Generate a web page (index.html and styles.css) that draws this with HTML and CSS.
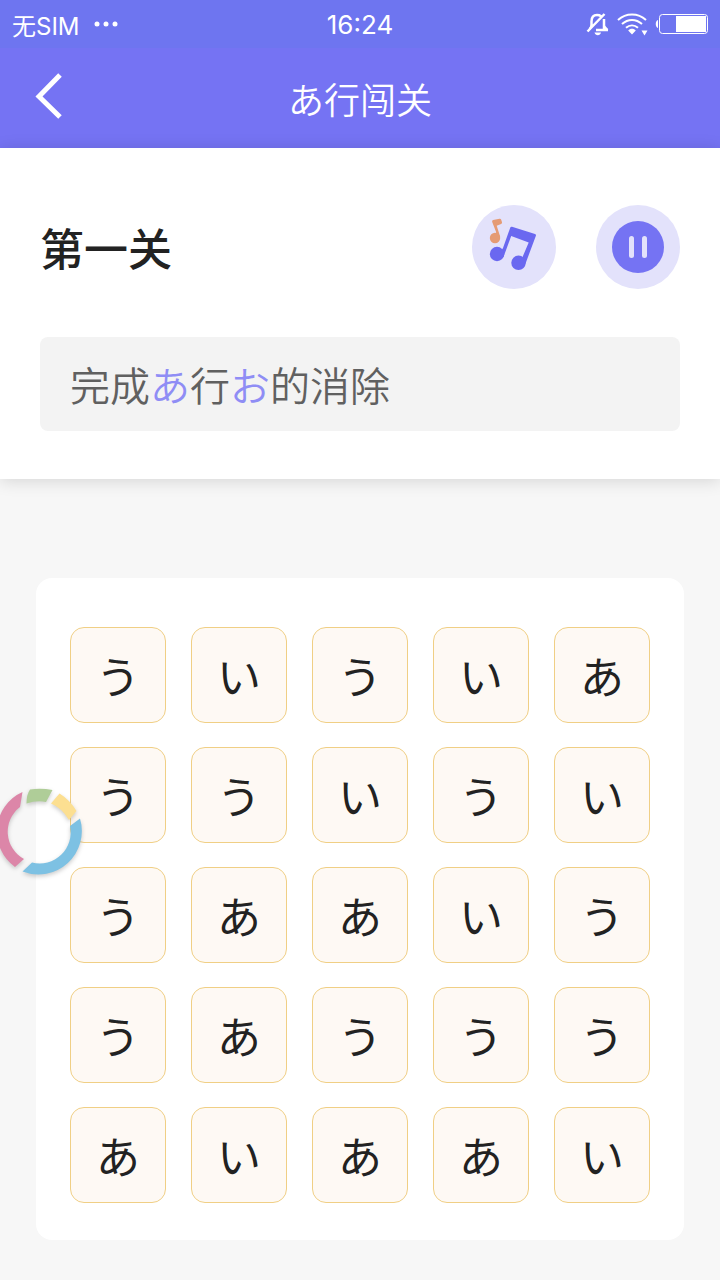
FILE: index.html
```html
<!doctype html>
<html lang="zh-CN">
<head>
    <meta charset="utf-8">
    <meta name="viewport" content="width=device-width, initial-scale=1">
    <title>あ行闯关</title>
    <link rel="stylesheet" href="styles.css">
</head>
<body>
<div class="status-bar">
    <div class="carrier">
        <span>无SIM</span>
        <svg width="24" height="6" viewBox="0 0 24 6" fill="#fff">
            <circle cx="3" cy="3" r="2.500"/><circle cx="12" cy="3" r="2.500"/><circle cx="21" cy="3" r="2.500"/>
        </svg>
    </div>
    <div class="clock">16:24</div>
    <div class="indicators">
        <svg width="24" height="24" viewBox="0 0 24 24" fill="none" stroke="#fff" stroke-width="2.500">
            <path d="M5.500 14V9.500C5.500 5.500 7.500 3 11 3c1.500 0 3 .4 4 1.200M18 7V18M10 18h12M1.500 19.500L18.500 2"/>
            <path d="M3.500 17l2.500-4M18 14l3.500 4" stroke-width="2"/>
            <path d="M8.500 20.500h6.500c-.5 1.800-1.600 2.700-3.200 2.700s-2.800-.9-3.300-2.700z" fill="#fff" stroke="none"/>
        </svg>
        <svg width="32" height="24" viewBox="0 0 32 24" fill="none" stroke="#fff" stroke-width="2">
            <path d="M2 8C10 .5 22 .5 30 8M6 12c6-5.500 14-5.500 20 0M10 15.800c3.600-3.200 8.400-3.200 12 0"/>
            <path d="M12.200 18.500c2-2.200 5.600-2.200 7.600 0L16 22.500zM25.500 18.500h6L28.500 23.500z" fill="#fff" stroke="none"/>
        </svg>
        <svg width="54" height="24" viewBox="0 0 54 24" fill="none" stroke="#fff">
            <path d="M4 8c-3 1-3 7 0 8z" fill="#fff" stroke="none"/>
            <rect x="5.500" y="2.500" width="48" height="19" rx="3"/>
            <path d="M22 4h30v16H22z" fill="#fff" stroke="none"/>
        </svg>
    </div>
</div>

<header class="nav-bar">
    <button type="button" class="back" aria-label="返回">
        <svg width="32" height="52" viewBox="0 0 32 52" fill="none" stroke="#fff" stroke-width="5">
            <path d="M28 3L7 24.500L28 45"/>
        </svg>
    </button>
    <h1>あ行闯关</h1>
</header>

<section class="level">
    <div class="level-head">
        <h2>第一关</h2>
        <button type="button" class="round" aria-label="音乐">
            <svg width="84" height="84" viewBox="0 0 84 84">
                <g fill="#6a68f0">
                    <path d="M38.300 22.500q.5-1 1.700-.7L63 29q1.300.5.900 1.700L53 60l-5-2 8.700-20.500-17.500-6.500L31.500 52l-5-2 4.500-7z"/>
                    <circle cx="25" cy="49" r="7.200"/>
                    <circle cx="46.500" cy="57.800" r="7.200"/>
                </g>
                <g fill="#e59b74">
                    <path d="M20.200 17q-.5-1.400.9-1.900l6.400-1.300q1.200-.3 1.700.9l.8 2.500q.3 1.200-.9 1.700l-4.400 1.800 3.500 11-4.700 1.300.6-6z"/>
                    <circle cx="23" cy="33" r="5.200"/>
                </g>
            </svg>
        </button>
        <button type="button" class="round" aria-label="暂停">
            <svg width="84" height="84" viewBox="0 0 84 84">
                <circle cx="42" cy="42" r="26" fill="#7573f3"/>
                <rect x="33" y="31" width="5" height="22" rx="2.500" fill="#e3e2fb"/>
                <rect x="46" y="31" width="5" height="22" rx="2.500" fill="#e3e2fb"/>
            </svg>
        </button>
    </div>
    <p class="task">完成<span>あ</span>行<span>お</span>的消除</p>
</section>

<main class="board">
    <button type="button">う</button>
    <button type="button">い</button>
    <button type="button">う</button>
    <button type="button">い</button>
    <button type="button">あ</button>

    <button type="button">う</button>
    <button type="button">う</button>
    <button type="button">い</button>
    <button type="button">う</button>
    <button type="button">い</button>

    <button type="button">う</button>
    <button type="button">あ</button>
    <button type="button">あ</button>
    <button type="button">い</button>
    <button type="button">う</button>

    <button type="button">う</button>
    <button type="button">あ</button>
    <button type="button">う</button>
    <button type="button">う</button>
    <button type="button">う</button>

    <button type="button">あ</button>
    <button type="button">い</button>
    <button type="button">あ</button>
    <button type="button">あ</button>
    <button type="button">い</button>
</main>

<!-- Floating shortcut ring -->
<button type="button" class="float-ring" aria-label="快捷菜单">
    <svg width="90" height="96" viewBox="0 0 90 96">
        <path fill="#dc86a8" d="M22.500 7A43.500 43.500 0 0 0 15 82l9-8A31 31 0 0 1 20 22z"/>
        <path fill="#afcd98" d="M30 4.500q11-1.500 22.500.5L46 17q-9-2-19.500 1.500 0-9 3.500-14z"/>
        <path fill="#fcdf91" d="M59.500 8.500Q70 15 76.500 26L69 35Q62 23 51 18.500z"/>
        <path fill="#7dc1e3" d="M80 33.500A43.500 43.500 0 0 1 22.500 86.500L32 77.500A31 31 0 0 0 70 41z"/>
    </svg>
</button>
</body>
</html>
```
FILE: styles.css
```css
* {
    box-sizing: border-box;
}
body {
    margin: 0;
    position: relative;
    min-height: 100vh;
    overflow-x: hidden;
    background-color: #f7f7f7;
    color: #222;
    font-family: "Noto Sans CJK SC", sans-serif;
}
button {
    padding: 0;
    border: none;
    background: none;
    color: inherit;
    font-family: inherit;
    cursor: pointer;
}
svg {
    display: block;
}
h1, h2, p {
    margin: 0;
}

/* Status bar */
.status-bar {
    display: grid;
    grid-template-columns: 1fr auto 1fr;
    align-items: center;
    height: 48px;
    padding: 0 12px;
    background-color: #6e75f0;
    color: #fff;
    font-family: Inter, "Noto Sans CJK SC", sans-serif;
    font-size: 26px;
}
.carrier {
    display: flex;
    align-items: center;
    gap: 14px;
    font-size: 24px;
}
.indicators {
    display: flex;
    justify-content: flex-end;
    gap: 6px;
}

/* Title bar */
.nav-bar {
    display: grid;
    grid-template-columns: 64px 1fr 64px;
    align-items: center;
    height: 100px;
    background-color: #7573f3;
    color: #fff;
}
.back {
    justify-self: end;
}
.nav-bar h1 {
    font-size: 36px;
    font-weight: 350;
    text-align: center;
}

/* Level info */
.level {
    padding: 57px 40px 48px;
    background-color: #fff;
    box-shadow: 0 2px 16px rgba(0, 0, 0, 0.14);
}
.level-head {
    display: flex;
    align-items: center;
    gap: 40px;
    margin-bottom: 48px;
}
.level-head h2 {
    flex: 1;
    font-size: 44px;
    font-weight: 500;
}
.round {
    border-radius: 50%;
    background-color: #e3e2fb;
}
.task {
    padding: 17px 30px;
    border-radius: 8px;
    background-color: #f3f3f3;
    color: #606060;
    font-size: 40px;
    font-weight: 350;
    line-height: 60px;
}
.task span {
    color: #8f8df5;
}

/* Tiles */
.board {
    display: grid;
    grid-template-columns: repeat(5, 1fr);
    gap: 24px 25px;
    margin: 99px 36px 40px;
    padding: 49px 34px 37px;
    border-radius: 16px;
    background-color: #fff;
}
.board button {
    aspect-ratio: 1;
    border: 1px solid #f0cf85;
    border-radius: 14px;
    background-color: #fef9f4;
    font-size: 44px;
    line-height: 60px;
}

.float-ring {
    position: absolute;
    top: 785px;
    left: 0;
    filter: drop-shadow(0 2px 2px rgba(0, 0, 0, 0.2));
}
```
